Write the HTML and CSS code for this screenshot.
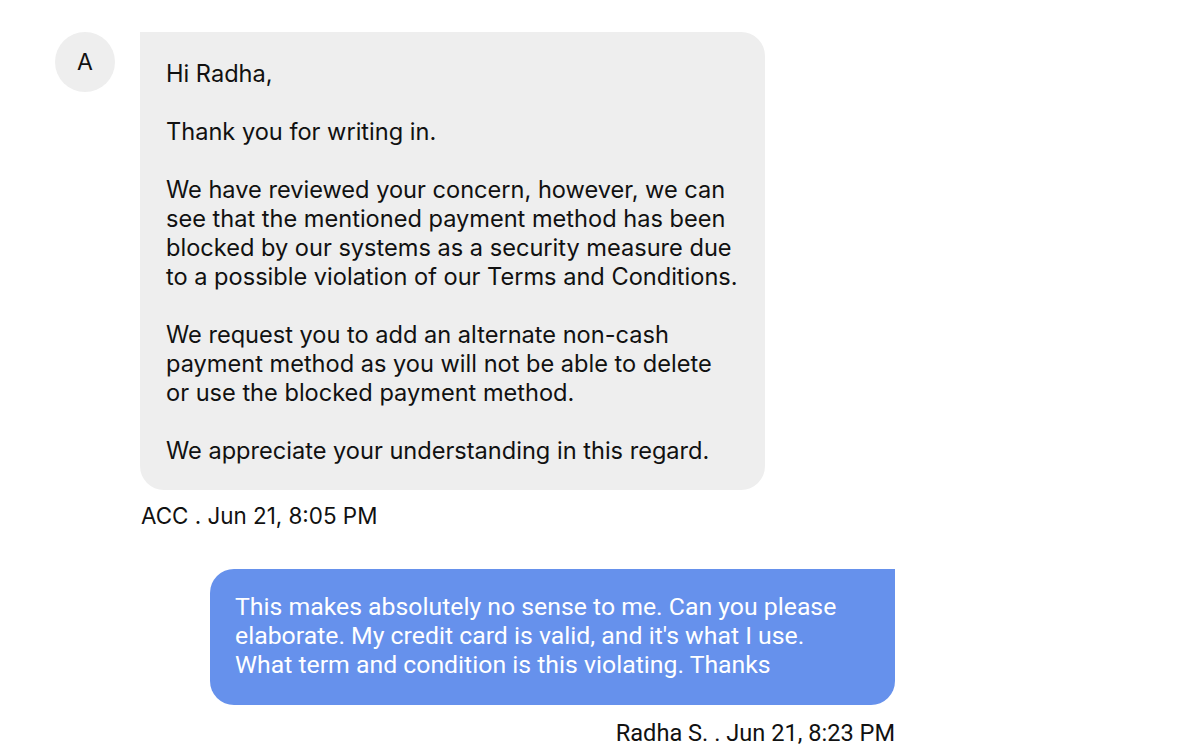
FILE: index.html
```html
<!DOCTYPE html>
<html>
<head>
<meta charset="utf-8">
<link rel="stylesheet" href="styles.css">
</head>
<body>
<div class="chat">
  <div class="msg-in">
    <div class="avatar">A</div>
    <div class="in-col">
      <div class="bubble-in">
        <p>Hi Radha,</p>
        <p>Thank you for writing in.</p>
        <p>We have reviewed your concern, however, we can<br>see that the mentioned payment method has been<br>blocked by our systems as a security measure due<br>to a possible violation of our Terms and Conditions.</p>
        <p>We request you to add an alternate non-cash<br>payment method as you will not be able to delete<br>or use the blocked payment method.</p>
        <p>We appreciate your understanding in this regard.</p>
      </div>
      <div class="meta-in">ACC . Jun 21, 8:05 PM</div>
    </div>
  </div>
  <div class="msg-out">
    <div class="bubble-out">This makes absolutely no sense to me. Can you please<br>elaborate. My credit card is valid, and it's what I use.<br>What term and condition is this violating. Thanks</div>
    <div class="meta-out">Radha S. . Jun 21, 8:23 PM</div>
  </div>
</div>
</body>
</html>
```

FILE: styles.css
```css
html, body {
  margin: 0;
  padding: 0;
  background: #ffffff;
}
.chat {
  padding: 32px 0 0 55px;
  font-family: Inter, "Liberation Sans", sans-serif;
  color: #111111;
}
.msg-in {
  display: flex;
  gap: 25px;
  align-items: flex-start;
}
.avatar {
  width: 60px;
  height: 60px;
  border-radius: 50%;
  background: #eeeeee;
  display: flex;
  align-items: center;
  justify-content: center;
  font-size: 23px;
  flex: none;
}
.in-col {
  width: 625px;
}
.bubble-in {
  background: #eeeeee;
  border-radius: 0 24px 24px 24px;
  padding: 27px 20px 25px 26px;
  font-size: 23.58px;
  line-height: 29px;
  white-space: nowrap;
}
.bubble-in p {
  margin: 0 0 29px 0;
}
.bubble-in p:last-child {
  margin-bottom: 0;
}
.meta-in {
  margin-top: 11px;
  font-size: 22.4px;
  line-height: 29px;
  padding-left: 1px;
}
.msg-out {
  margin: 39px 0 0 155px;
  width: 685px;
  display: flex;
  flex-direction: column;
  font-family: Roboto, "Liberation Sans", sans-serif;
}
.bubble-out {
  background: #6691ec;
  color: #ffffff;
  border-radius: 24px 0 24px 24px;
  padding: 23px 20px 26px 25px;
  font-size: 24.8px;
  line-height: 29px;
  white-space: nowrap;
}
.meta-out {
  margin-top: 14px;
  align-self: flex-end;
  font-size: 23.6px;
  line-height: 29px;
}
```
